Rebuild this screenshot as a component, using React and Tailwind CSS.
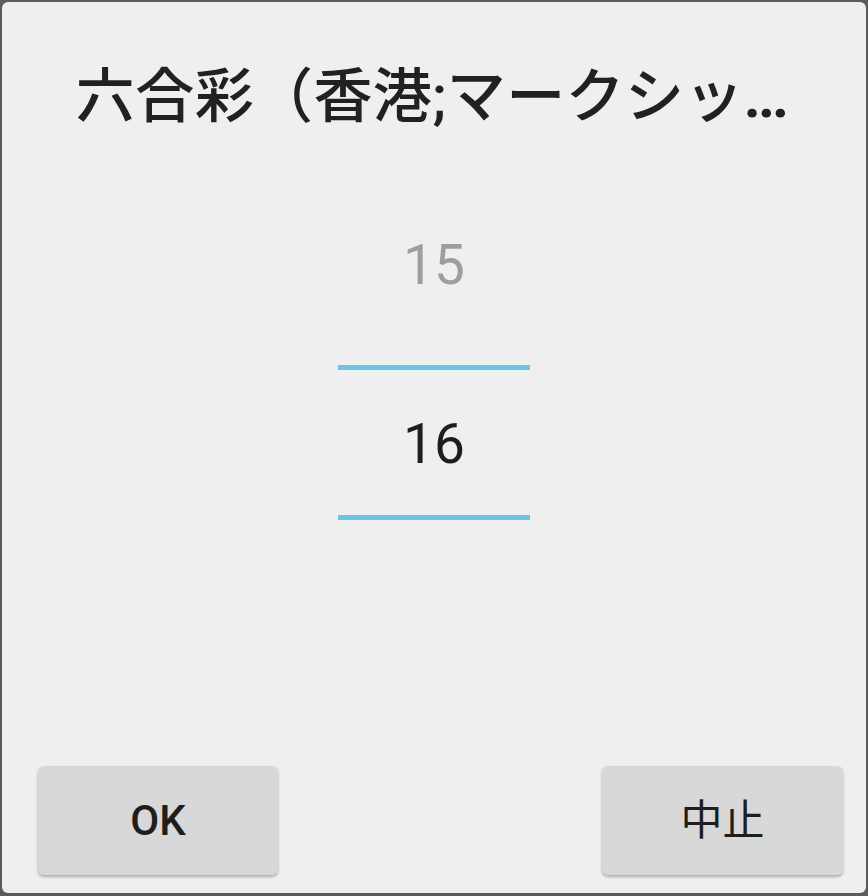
import React from 'react';

const font = { fontFamily: 'Roboto, "Noto Sans CJK JP", sans-serif' };

const App = () => {
  return (
    <div className="w-[868px] h-[896px] bg-[#5b5b5b] pt-[2px] px-[2px] pb-[3px]" style={font}>
      <div className="h-full rounded-[6px] bg-[#efefef] flex flex-col">
        <div className="mt-[65px] h-[60px] leading-[60px] text-[59px] tracking-[0.4px] font-medium text-[#212121] text-center whitespace-nowrap pr-[6px]">
          六合彩（香港;マークシッ<span className="font-bold tracking-[-3px]">...</span>
        </div>

        <div className="mt-[93px] mx-auto w-[192px] flex flex-col items-stretch">
          <div className="h-[90px] flex items-center justify-center text-[55px] leading-none text-[#9e9e9e]">15</div>
          <div className="mt-[55px] h-[5px] bg-[#6ac6e8]" />
          <div className="h-[145px] pt-[4px] flex items-center justify-center text-[55px] leading-none text-[#1e1e1e]">16</div>
          <div className="h-[5px] bg-[#6ac6e8]" />
        </div>

        <div className="flex-1" />

        <div className="flex justify-between pl-[36px] pr-[23px] pb-[18px]">
          <button className="w-[240px] h-[109px] rounded-[6px] bg-[#d7d8d7] shadow-[0_2px_3px_rgba(0,0,0,0.28)] text-[42px] font-medium text-[#1e1e1e]">
            OK
          </button>
          <button className="w-[241px] h-[109px] rounded-[6px] bg-[#d7d8d7] shadow-[0_2px_3px_rgba(0,0,0,0.28)] text-[42px] text-[#1e1e1e]">
            中止
          </button>
        </div>
      </div>
    </div>
  );
};

export default App;
